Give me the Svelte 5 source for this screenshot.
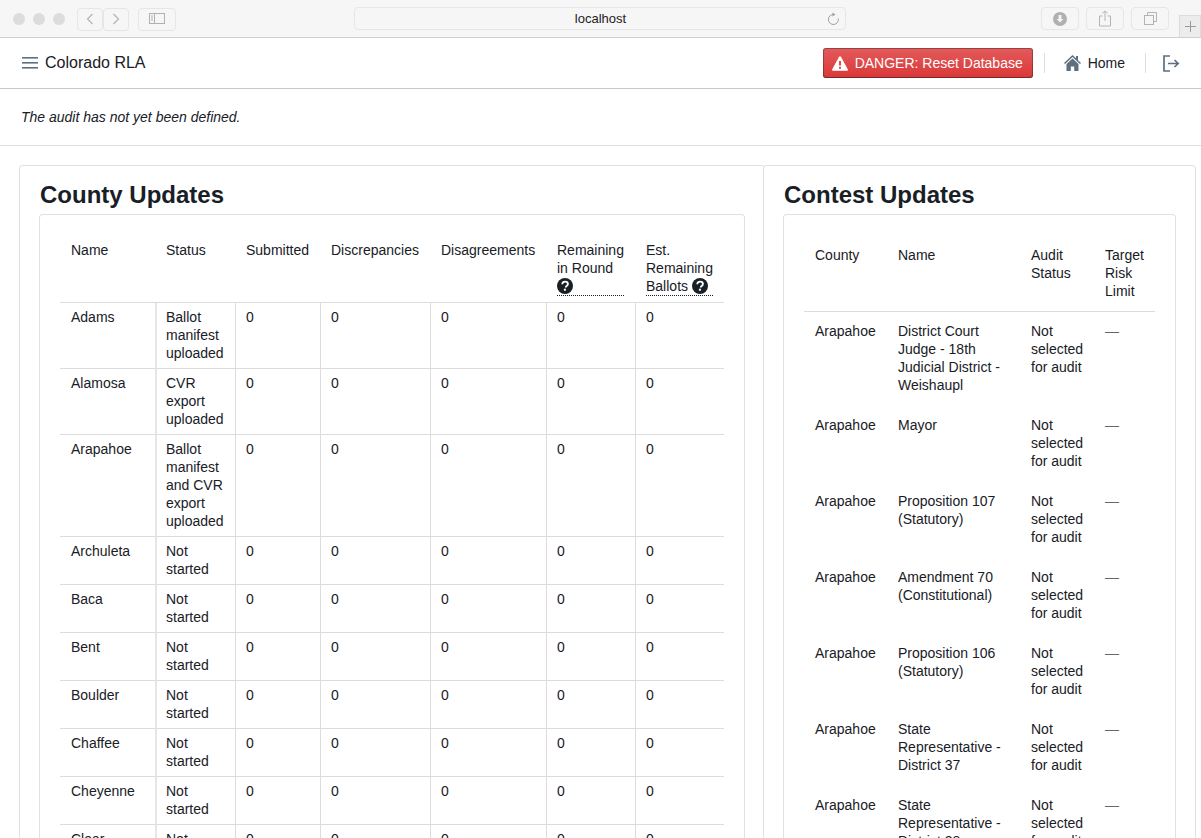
<script lang="ts">
  const counties = [
    ["Adams", "Ballot manifest uploaded"],
    ["Alamosa", "CVR export uploaded"],
    ["Arapahoe", "Ballot manifest and CVR export uploaded"],
    ["Archuleta", "Not started"],
    ["Baca", "Not started"],
    ["Bent", "Not started"],
    ["Boulder", "Not started"],
    ["Chaffee", "Not started"],
    ["Cheyenne", "Not started"],
    ["Clear Creek", "Not started"],
  ];

  const contests = [
    "District Court Judge - 18th Judicial District - Weishaupl",
    "Mayor",
    "Proposition 107 (Statutory)",
    "Amendment 70 (Constitutional)",
    "Proposition 106 (Statutory)",
    "State Representative - District 37",
    "State Representative - District 38",
  ];
</script>

<div class="browser-bar">
  <div class="lights"><span></span><span></span><span></span></div>
  <div class="nav-btns">
    <div class="chrome-btn arrow">
      <svg width="10" height="14" viewBox="0 0 10 14" fill="none" stroke="#b4b4b4" stroke-width="1.2"><path d="M7.5 2 2.5 7l5 5"/></svg>
    </div>
    <div class="chrome-btn arrow">
      <svg width="10" height="14" viewBox="0 0 10 14" fill="none" stroke="#b4b4b4" stroke-width="1.2"><path d="m2.5 2 5 5-5 5"/></svg>
    </div>
  </div>
  <div class="chrome-btn sidebar">
    <svg width="16" height="12" viewBox="0 0 16 12" fill="none" stroke="#b0b0b0"><rect x=".5" y=".5" width="15" height="10"/><path d="M5.5 .5v10M2 3h2M2 5h2M2 7h2"/></svg>
  </div>
  <div class="address">
    <span>localhost</span>
    <svg class="reload" width="14" height="14" viewBox="0 0 14 14" fill="none" stroke="#a0a0a0" stroke-width="1"><path d="M7.5 2.5a5 5 0 1 0 4.8 4"/><path d="M6.5 .5 9.5 2.5 6.5 4.500z" fill="#a0a0a0" stroke="none"/></svg>
  </div>
  <div class="chrome-right">
    <div class="chrome-btn tool">
      <svg width="14" height="14" viewBox="0 0 14 14"><circle cx="7" cy="7" r="7" fill="#b0b0b0"/><path d="M5.6 3h2.8v4h2L7 10.6 3.6 7h2z" fill="#f5f5f5"/></svg>
    </div>
    <div class="chrome-btn tool">
      <svg width="12" height="17" viewBox="0 0 12 17" fill="none" stroke="#b4b4b4"><path d="M3.5 6H.5v10h11V6h-3M6 11V1M3.5 3.2 6 1l2.5 2.2"/></svg>
    </div>
    <div class="chrome-btn tool">
      <svg width="13" height="13" viewBox="0 0 13 13" fill="none" stroke="#b4b4b4"><rect x=".5" y="3.5" width="9" height="9"/><path d="M3.5 3.5v-3h9v9h-3"/></svg>
    </div>
  </div>
  <div class="new-tab">
    <svg width="11" height="11" viewBox="0 0 11 11" stroke="#9a9a9a"><path d="M5.5 0v11M0 5.5h11"/></svg>
  </div>
</div>

<nav class="navbar">
  <div class="nav-left">
    <svg class="menu-icon" width="16" height="16" viewBox="0 0 16 16" fill="#5c7080"><rect x="0" y="2" width="16" height="1.6"/><rect x="0" y="7" width="16" height="1.6"/><rect x="0" y="12" width="16" height="1.6"/></svg>
    <span class="brand">Colorado RLA</span>
  </div>
  <div class="nav-right">
    <button class="danger">
      <svg width="16" height="15" viewBox="0 0 16 15"><path fill-rule="evenodd" fill="#fff" d="M8 .3c.4 0 .7.2.9.5l6.900 12.400c.4.7-.1 1.500-.9 1.500H1.100c-.8 0-1.300-.8-.9-1.500L7.100.8c.2-.3.5-.5.9-.5zM7 5v4.500h2V5zm0 5.700v2h2v-2z"/></svg>
      DANGER: Reset Database
    </button>
    <span class="divider"></span>
    <a class="home">
      <svg width="17" height="16" viewBox="0 0 17 16" fill="#5c7080"><path d="M8.500 0 0 8l1 1 7.500-7 7.500 7 1-1-3-2.800V1h-2v2.300z"/><path d="M8.500 3.400 2.500 9v7h4.300v-4.500h3.400V16h4.300V9z"/></svg>
      Home
    </a>
    <span class="divider second"></span>
    <svg class="logout" width="17" height="17" viewBox="0 0 17 17" fill="none" stroke="#5c7080" stroke-width="1.700"><path d="M7 1H1v15h6"/><path d="M5 8.500h10M11.500 5l3.700 3.500-3.700 3.500"/></svg>
  </div>
</nav>

<div class="notice"><em>The audit has not yet been defined.</em></div>

<div class="panels">
  <section class="card county">
    <h2>County Updates</h2>
    <div class="card inner">
      <table class="condensed">
        <colgroup>
          <col style="width:95px" /><col style="width:80px" /><col style="width:85px" /><col style="width:110px" /><col style="width:116px" /><col style="width:89px" /><col style="width:89px" />
        </colgroup>
        <thead>
          <tr>
            <th>Name</th>
            <th>Status</th>
            <th>Submitted</th>
            <th>Discrepancies</th>
            <th>Disagreements</th>
            <th><span class="tip">Remaining in Round {@render help()}</span></th>
            <th><span class="tip">Est. Remaining Ballots {@render help()}</span></th>
          </tr>
        </thead>
        <tbody>
          {#each counties as [name, status]}
            <tr>
              <td>{name}</td>
              <td>{status}</td>
              <td>0</td>
              <td>0</td>
              <td>0</td>
              <td>0</td>
              <td>0</td>
            </tr>
          {/each}
        </tbody>
      </table>
    </div>
  </section>

  <section class="card contest">
    <h2>Contest Updates</h2>
    <div class="card inner">
      <table class="plain">
        <colgroup>
          <col style="width:83px" /><col style="width:133px" /><col style="width:74px" /><col style="width:61px" />
        </colgroup>
        <thead>
          <tr>
            <th>County</th>
            <th>Name</th>
            <th>Audit Status</th>
            <th>Target Risk Limit</th>
          </tr>
        </thead>
        <tbody>
          {#each contests as contest}
            <tr>
              <td>Arapahoe</td>
              <td>{contest}</td>
              <td>Not selected for audit</td>
              <td class="dash">—</td>
            </tr>
          {/each}
        </tbody>
      </table>
    </div>
  </section>
</div>

{#snippet help()}
  <svg class="help" width="16" height="16" viewBox="0 0 16 16"><circle cx="8" cy="8" r="8" fill="#182026"/><path d="M5.300 6.300c0-1.700 1.200-2.700 2.800-2.700s2.800 1 2.800 2.400c0 1-.5 1.500-1.300 2.100-.7.500-.8.800-.8 1.400" fill="none" stroke="#fff" stroke-width="1.900"/><rect x="6.900" y="10.700" width="2" height="2" fill="#fff"/></svg>
{/snippet}

<style>
  :global(html), :global(body) {
    margin: 0;
    height: 838px;
    overflow: hidden;
    background: #fff;
  }

  :global(body) {
    font-family: "Liberation Sans", Arial, sans-serif;
    font-size: 14px;
    line-height: 18px;
    color: #182026;
  }

  .browser-bar {
    position: relative;
    display: flex;
    align-items: center;
    height: 38px;
    padding: 1px 0 0 13px;
    box-sizing: border-box;
    background: #f6f6f6;
    border-bottom: 1px solid #cfcfcf;
  }

  .lights {
    display: flex;
    gap: 8px;
  }

  .lights span {
    width: 12px;
    height: 12px;
    border-radius: 50%;
    background: #dcdcdc;
  }

  .chrome-btn {
    display: flex;
    align-items: center;
    justify-content: center;
    height: 23px;
    box-sizing: border-box;
    border: 1px solid #e6e6e6;
    border-radius: 4px;
    background: #f6f6f6;
  }

  .nav-btns {
    display: flex;
    margin-left: 12px;
  }

  .arrow {
    width: 26px;
  }

  .sidebar {
    width: 38px;
    margin-left: 9px;
  }

  .address {
    position: absolute;
    left: 354px;
    top: 7px;
    width: 492px;
    height: 23px;
    padding: 1px 0 0 1px;
    box-sizing: border-box;
    display: flex;
    align-items: center;
    justify-content: center;
    border: 1px solid #e6e6e6;
    border-radius: 4px;
    font-size: 13px;
    color: #222;
  }

  .reload {
    position: absolute;
    right: 5px;
    top: 4px;
  }

  .chrome-right {
    position: absolute;
    left: 1041px;
    top: 7px;
    display: flex;
    gap: 7px;
  }

  .tool {
    width: 38px;
  }

  .new-tab {
    position: absolute;
    right: 0;
    bottom: -1px;
    width: 22px;
    height: 23px;
    display: flex;
    align-items: center;
    justify-content: center;
    background: #ececec;
    border: 1px solid #dcdcdc;
    border-bottom-color: #cfcfcf;
    box-sizing: border-box;
  }

  .navbar {
    display: flex;
    align-items: center;
    justify-content: space-between;
    height: 51px;
    box-sizing: border-box;
    padding: 0 21px 0 22px;
    background: #fff;
    border-bottom: 1px solid #c8c8c8;
  }

  .nav-left {
    display: flex;
    align-items: center;
    gap: 7px;
  }

  .brand {
    font-size: 16px;
  }

  .nav-right {
    display: flex;
    align-items: center;
  }

  .danger {
    display: flex;
    align-items: center;
    gap: 7px;
    width: 210px;
    height: 30px;
    padding: 0 9px;
    box-sizing: border-box;
    border: none;
    border-radius: 3px;
    background: linear-gradient(#e35b5b, #db3737);
    box-shadow: inset 0 0 0 1px rgba(16, 22, 26, 0.35), inset 0 -1px 0 rgba(16, 22, 26, 0.2);
    color: #fff;
    font: inherit;
    white-space: nowrap;
  }

  .divider {
    width: 1px;
    height: 20px;
    margin: 0 19px 0 11px;
    background: #dcdfe2;
  }

  .divider.second {
    margin: 0 17px 0 20px;
  }

  .home {
    display: flex;
    align-items: center;
    gap: 7px;
    color: #182026;
  }

  .logout {
    display: block;
  }

  .notice {
    height: 57px;
    padding: 19px 21px 0;
    box-sizing: border-box;
    border-bottom: 1px solid #dfdfdf;
  }

  .panels {
    display: flex;
    padding: 20px 0 0 20px;
  }

  .card {
    background: #fff;
    border-radius: 3px;
    box-shadow: 0 0 0 1px #e1e1e1;
  }

  .county,
  .contest {
    flex: none;
    box-sizing: border-box;
    padding: 14px 20px 20px;
  }

  .county {
    width: 744px;
  }

  .contest {
    width: 431px;
  }

  h2 {
    margin: 0 0 6px;
    font-size: 24px;
    line-height: 29px;
    font-weight: 700;
  }

  .inner {
    padding: 20px;
  }

  table {
    table-layout: fixed;
    width: 100%;
    border-collapse: separate;
    border-spacing: 0;
  }

  th {
    text-align: left;
    vertical-align: top;
    font-weight: 400;
    padding: 6px 11px;
    border-bottom: 1px solid #dcdcdc;
  }

  td {
    vertical-align: top;
    padding: 5px 11px 6px;
  }

  .condensed td {
    border-bottom: 1px solid #dcdcdc;
  }

  .condensed td + td {
    border-left: 1px solid #dcdcdc;
    padding-left: 10px;
  }

  .condensed td:nth-child(2) {
    border-left: 2px solid #e6e6e6;
    padding-left: 9px;
  }

  .plain th {
    padding: 11px;
  }

  .plain td {
    padding: 10px 11px 12px;
  }

  .dash {
    color: #666;
  }

  .tip {
    display: inline-block;
    vertical-align: top;
    border-bottom: 1px dotted #182026;
  }

  .help {
    vertical-align: -3px;
  }
</style>
